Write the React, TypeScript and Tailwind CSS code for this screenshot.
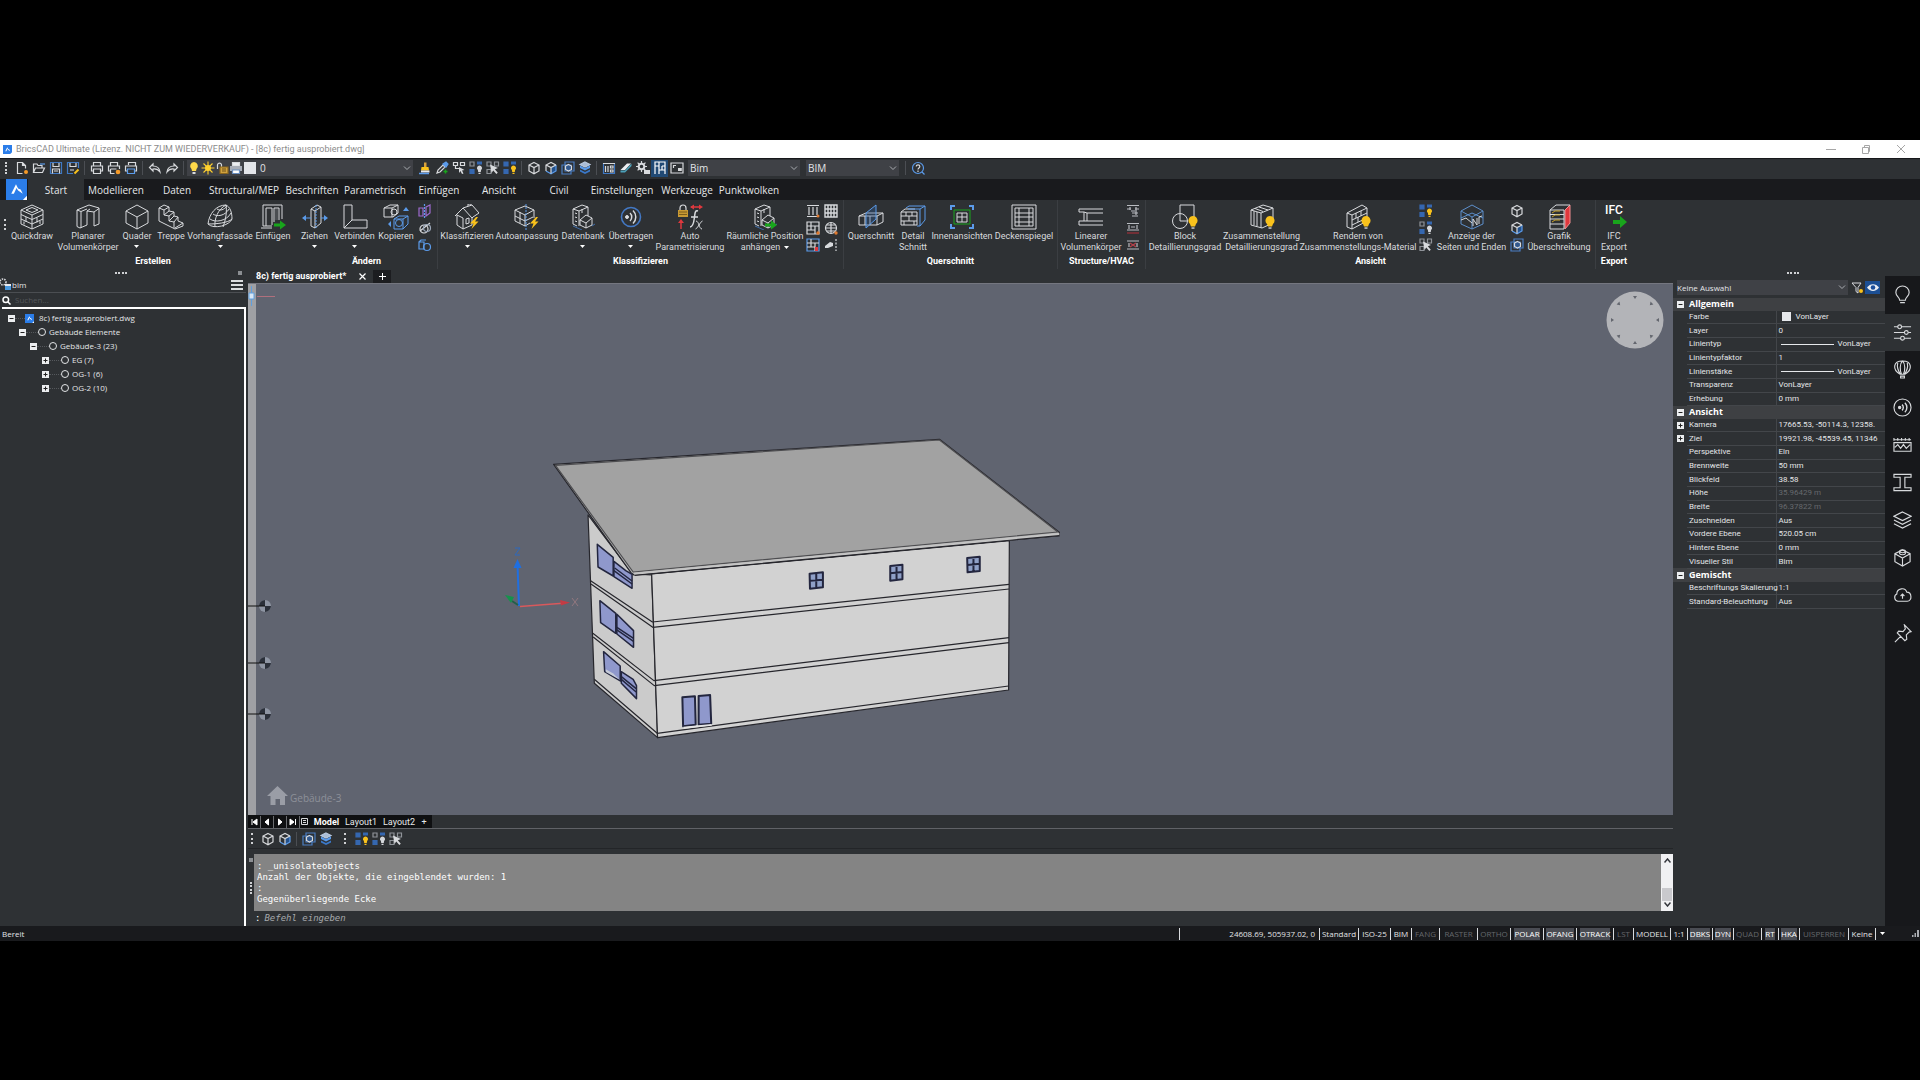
import React from 'react';

type Kids = { children: React.ReactNode };
const W = '#d8dadd';
const B = '#5b9bea';
const Y = '#f9c21c';
const G = '#19a51c';
const R = '#e0383e';

/* ---------- icon canvases ---------- */
const Big = ({ children }: Kids) => (
  <svg className="h-[26px] w-[26px] shrink-0" viewBox="0 0 26 26" fill="none" stroke={W} strokeWidth="1" aria-hidden="true">
    {children}
  </svg>
);
const Sm = ({ children }: Kids) => (
  <svg className="h-[14px] w-[14px] shrink-0" viewBox="0 0 14 14" fill="none" stroke={W} strokeWidth="1.2" aria-hidden="true">
    {children}
  </svg>
);
const Arrow = ({ x = 13, y = 20 }) => (
  <path d={`M${x} ${y - 1.5}h6v-3l6 4.5-6 4.5v-3h-6z`} fill={G} stroke="none" />
);
const Bulb = ({ x = 20, y = 16, s = 1 }) => (
  <g transform={`translate(${x} ${y}) scale(${s})`} stroke="none">
    <path d="M0-5a4.6 4.6 0 0 1 3 8L2 5.500h-4L-3 3a4.600 4.600 0 0 1 3-8z" fill={Y} />
    <path d="M-1.500 6.300h3v1.500h-3z" fill="#c9cacc" />
  </g>
);
const Bolt = ({ x = 18, y = 13 }) => (
  <path d={`M${x + 4} ${y}l-6 6.500h3.500l-2 5.500 7-7.500h-3.500l3-4.500z`} fill={Y} stroke="none" />
);
const CubeP = ({ c = W }) => <path d="M7 1.500l5 2.500v6l-5 2.800-5-2.800V4zM2 4l5 2.600L12 4M7 6.600v6" stroke={c} />;

const Cube = () => <Sm><CubeP /></Sm>;
const CubeBlue = () => (
  <Sm>
    <path d="M7 6.600L12 4v6l-5 2.800z" fill="#24528c" stroke="none" />
    <path d="M2 10l5 2.800 5-2.800V4" stroke={B} />
    <path d="M12 4L7 1.500 2 4v6M2 4l5 2.600L12 4M7 6.600v6" />
  </Sm>
);
const CubeFrame = () => (
  <Sm>
    <path d="M1 4h9v9H1z" stroke="#4a7fc4" />
    <path d="M4 1h9v9H4z" stroke="#4a7fc4" />
    <path d="M7.500 3.500l3 1.500v3.500l-3 1.500-3-1.500V5z" fill="#31588d" />
  </Sm>
);
const CubeStack = () => (
  <Sm>
    <path d="M7 1l5 2.500L7 6 2 3.500z" fill="#a9bcd6" stroke="#b9c9df" />
    <path d="M2 4.500L7 7l5-2.500v2.500L7 9.500 2 7z" stroke="none" fill={B} />
    <path d="M2 8.500v2L7 13l5-2.500v-2L7 11z" stroke="none" fill="#3a78c9" />
  </Sm>
);
const TilesBulb = ({ lit = true }) => (
  <Sm>
    <path d="M1 1h4v4H1z" fill={lit ? '#3567b0' : 'none'} stroke={lit ? '#3567b0' : '#8f9399'} />
    <path d="M1 8.500h4v4H1z" fill="#3567b0" stroke="#3567b0" />
    <path d="M8 .500h5v3H8z" fill="#3567b0" stroke="none" />
    <path d="M10.500 4.500a2.600 2.600 0 0 1 1.600 4.600L11.800 11H9.200l-.3-1.900a2.600 2.600 0 0 1 1.600-4.600zM9.500 11.800h2V13h-2z" fill={lit ? Y : '#d4d6da'} stroke="none" />
  </Sm>
);
const TilesCursor = () => (
  <Sm>
    <path d="M1 1h4v4H1zM8.500 1h4v4h-4zM1 8.500h4v4H1z" stroke="#8f9399" />
    <path d="M4 3.500l8 3.500-3.200 1.200 3 3.600-1.500 1.200-3-3.600L5.500 12z" fill={W} stroke="none" />
  </Sm>
);

/* ---------- quick access icons ---------- */
const NewFile = () => <Sm><path d="M7.500 12.500H2.500v-11h5l3 3v3M7.500 1.500v3h3" /><circle cx="11" cy="11" r="2" fill="#f59a28" stroke="none" /></Sm>;
const OpenFile = () => <Sm><path d="M1.500 11.500V3h3.500l1 1.500h4V7M1.500 11.500L3.500 7h9l-2 4.500z" /><path d="M8 3h5" stroke={B} /></Sm>;
const Save = () => <Sm><path d="M1.500 1.500h11v11h-11z" stroke="#3f78c4" /><path d="M4 2v3.500h6V2M3.500 12.500V8h7v4.500M5 10h4" /></Sm>;
const SaveAs = () => <Sm><path d="M12.500 7V1.500h-11v11H7" stroke="#3f78c4" /><path d="M4 2v3.500h6V2M4 9h4" /><path d="M8.500 12.500l4-4" stroke={Y} strokeWidth="2" /></Sm>;
const Print = () => <Sm><path d="M3.500 5V1.500h7V5M3.500 10h-2V5h11v5h-2M3.500 8h7v4.500h-7z" /></Sm>;
const PrintOrange = () => <Sm><path d="M3.500 5V1.500h7V5M3.500 10h-2V5h11v3M3.500 8h6M3.500 8v4.500h4" /><circle cx="11" cy="11" r="2.300" fill="#f59a28" stroke="none" /></Sm>;
const PrintBlue = () => <Sm><path d="M4.500 4V1.500h7V5M3.500 10h-2V5h11v5h-2" /><path d="M3.500 8h7v4.500h-7z" stroke={B} /></Sm>;
const Undo = () => <Sm><path d="M5 3L1.500 6.500 5 10V8c3-.5 5 .3 7 3-.5-4-3-6-7-6z" /></Sm>;
const Redo = () => <Sm><path d="M9 3l3.500 3.500L9 10V8c-3-.5-5 .3-7 3 .5-4 3-6 7-6z" /></Sm>;
const Lamp = () => <Sm><path d="M7 1a4 4 0 0 1 2.500 7L9 10H5l-.5-2A4 4 0 0 1 7 1z" fill="#ffd84a" stroke="none" /><path d="M5.500 11h3v2h-3z" fill={W} stroke="none" /></Sm>;
const Sun = () => <Sm><circle cx="7" cy="7" r="3" fill="#ffd02e" stroke="none" /><path d="M7 .500v13M.500 7h13M2.500 2.500l9 9M11.500 2.500l-9 9" stroke="#ffd02e" strokeWidth="1.100" /></Sm>;
const Unlock = () => <Sm><path d="M2.500 8V4c0-2.500 4-2.500 4 0v2" /><path d="M5 6h8v6.500H5z" fill="#d0a23f" stroke="#8b671f" /><path d="M7 8h4M7 10h4" stroke="#6d511a" /></Sm>;
const PrinterFill = () => <Sm><path d="M3.500 1.500h7V5h-7z" fill="#eceef2" /><path d="M1 5h12v5H1z" fill="#a9aeb8" stroke="none" /><path d="M3.500 9h7v3.500h-7z" fill="#fff" stroke="#6b8fc0" /></Sm>;
const Brush = () => <Sm><path d="M6 1.500h2.500V6H6z" fill="#d9a23a" stroke="none" /><path d="M3.500 6h7l.5 3.500H3z" fill={Y} stroke="none" /><path d="M3 10.500h8.500" stroke="#e8e9ec" strokeWidth="2" /><path d="M1 12.500h10" stroke={B} strokeWidth="1.500" /></Sm>;
const Dropper = () => <Sm><path d="M2 12l1-3 5-5 2 2-5 5z" stroke={W} /><path d="M8 3l3-2 2 2-2 3z" fill={B} stroke={B} /><path d="M10.500 8.500v4M8.500 10.500h4" stroke={G} strokeWidth="1.500" /></Sm>;
const TreeSel = () => <Sm><path d="M1.500 1.500h4v3h-4zM8.500 1.500h4v3h-4zM3.500 4.500v3H8" /><path d="M7 6l5.500 3-2.500.500 1.500 3-1.500.500-1.500-3L7 12z" fill={W} stroke="none" /></Sm>;
const Table = () => <Sm><path d="M1.500 2.500h11v10h-11z" stroke="#3f78c4" /><path d="M1 2.500h12M3.500 5v6M6 5v6M8.500 5h2.500v2H8.500zM8.500 9h2.500v2H8.500z" /></Sm>;
const Eraser = () => <Sm><path d="M1.500 9L8 2.500h4L6 9z" fill="#eceef2" stroke="none" /><path d="M1.500 9.500v2H6L12.500 5V2.500L6 9.500z" fill="#4ba0b8" stroke="none" /></Sm>;
const Gear = () => <Sm><circle cx="5.500" cy="5.500" r="2.800" strokeWidth="2" /><path d="M5.500 0v2M5.500 9v2M0 5.500h2M9 5.500h2M1.600 1.600l1.500 1.500M8 8l1.500 1.500M1.600 9.400L3 8M8 3l1.500-1.400" /><path d="M8 9h6v4H8z" fill={W} stroke="none" /></Sm>;
const Plan = () => <Sm><path d="M2 13V1h10v12M2 5h4V1M6 5v8M6 9h6M9 5h3M9 5v4" stroke="#fff" /></Sm>;
const Screen = () => <Sm><path d="M1 2h12v10H1zM3.500 7V4.500H6M8 9.500h3V7" /><path d="M8 7h3.500v3H8z" fill={W} stroke="none" /></Sm>;
const Help = () => <Sm><circle cx="7" cy="7" r="5.500" stroke={B} /><path d="M5.300 5.500c0-2.300 3.500-2.200 3.500 0C8.800 7 7 7 7 8.500M7 9.500V11" /><path d="M11 11l2.500 2.500" stroke={B} /></Sm>;

/* ---------- ribbon icons ---------- */
const Quickdraw = () => <Big><path d="M13 1l11 5-11 5L2 6zM2 6v14l11 5 11-5V6M13 11v14M2 10.500l11 5 11-5M2 15l11 5 11-5M7 6l6-2.500L19 6l-6 2.500z" /><path d="M7 13v5M18 13.500v5M5 17.500v3M21 17v3" /></Big>;
const Planar = () => <Big><path d="M2 6l12-5 10 3v16l-5 2V8l-7-1v14l-7 3-3-1.500zM2 6l4 1.500 6-2.500M6 7.500V24M19 8l5-3.500M12 7l3-2" /></Big>;
const Box = () => <Big><path d="M13 1l11 6v12l-11 6-11-6V7zM2 7l11 6 11-6M13 13v12" /></Big>;
const Stairs = () => <Big><path d="M1 4l5-3 5 2v4l5 1v4l4 1v4l5 2v3l-8 3L1 17zM1 4l5 2v5l5 1v5l5 1v6M6 6l5-3M6 11l5-4M11 12l5-4M11 17l5-5M16 18l4-5M17 24l8-5" /></Big>;
const Dome = () => <Big><path d="M1 20C2 10 9 1 19 1c4 2 6 7 6 14-2 6-18 11-24 5z" /><path d="M3 15c5 4 17 2 21-6M6 10c4 3 12 2 16-5M10 5c3 2 7 1 10-3M1 20c8 0 20-1 24-5M8 23C7 15 11 5 19 1M16 23c3-8 4-16 3-22" /></Big>;
const Insert = () => <Big><path d="M3 22V1h19v14M3 22h9M6 22V4h6v17M14 18V4h5v12M1 24h11" /><path d="M15 5h3v11h-3z" fill="#4b4e52" stroke="none" /><Arrow x={14} y={21} /></Big>;
const Pull = () => <Big><path d="M9 5l6-4 4 2v16l-6 5-4-2zM9 5l4 2 6-4M13 7v17" /><path d="M14 1v24" stroke={B} strokeDasharray="2 1" /><path d="M9 14H3M19 14h5" stroke={B} /><path d="M4 11v6l-4-3zM22 11v6l4-3z" fill={B} stroke="none" /></Big>;
const Join = () => <Big><path d="M2 1h8v15h15v8H2zM2 24l8-8" /></Big>;
const Copy = () => <Big><path d="M1 4l6-3h8v8l-5 4H1zM1 4h8v9M9 4l6-3" /><circle cx="11" cy="8" r="3" /><path d="M11 15l5-3h9v8l-5 5h-9zM11 15h9v10M20 15l5-3" stroke={B} /><circle cx="16" cy="19" r="3.500" stroke={B} /><path d="M20 7h6l-3-4zM8 17v6l-3-3z" fill={B} stroke="none" /></Big>;
const Classify = () => <Big><path d="M1 12L9 4l9-3 7 8-6 4M9 4l9 10M18 14v7l-9 4-6-4V11M9 25V14M3 11l6 3M18 14l1-1" /><path d="M12 15l3-1v5l-3 1zM14 2V0h3v1" /><Bolt x={18} y={13} /></Big>;
const AutoFit = () => <Big><path d="M1 6l10-4 9 4-9 5zM1 6v11l10 5V11M20 6v8M11 22l5-3M1 12l10 5 8-4M6 8v11" /><path d="M12 0v26" stroke={B} strokeDasharray="2 1" /><Bolt x={18} y={13} /></Big>;
const Db = ({ arrow = false }) => (
  <Big>
    <path d="M3 5l9-4 6 2v9M3 5v15l4 2M3 5l6 2v15M9 7l9-4M5 9l2 .7M5 13l2 .7M5 17l2 .7M12 5v4" />
    <path d="M10 16l6-5 6 3v7l-6 3-6-3zM10 16l6 3 6-5M16 19v5" />
    <path d="M3 22l9 4M22 22l3-2" stroke="#3f6ca8" />
    {arrow && <Arrow x={13} y={21} />}
  </Big>
);
const Transfer = () => <Big><circle cx="13" cy="13" r="9.500" stroke="#4378c4" strokeWidth="1.600" /><circle cx="9" cy="13" r="1.500" fill={W} /><path d="M12 9a5.500 5.500 0 0 1 0 8M15 6.500a9 9 0 0 1 0 13" strokeWidth="1.500" /></Big>;
const Fx = () => (
  <Big>
    <path d="M3 6V4c0-4 6-4 6 0v2" stroke={W} strokeWidth="1.200" />
    <path d="M1 6h10v7H1z" fill="#c99a33" stroke="none" />
    <path d="M2 8h8M2 10.500h8" stroke="#7c5d1c" />
    <path d="M4 25v-7M14 3h10" stroke={R} strokeWidth="1.500" />
    <path d="M1 19h6l-3-4zM17 .500v5l-4-2.500zM22 .500v5l4-2.500z" fill={R} stroke="none" />
    <path d="M21 7c-3-1-3 2-3.500 6s-1 10-4.500 10M14 13h7" strokeWidth="1.500" />
    <path d="M19 17c3 0 3 8 6 8M25.500 17c-3 1-4 7-7 8" />
  </Big>
);
const Section = () => <Big><path d="M1 12l7-3h17v9l-6 3H1zM1 12h18v9M19 12l6-3M7 12v9M12 12v9" /><path d="M8 9l10-8v14L8 24z" stroke={B} fill="#2f5f9f55" /></Big>;
const Detail = () => <Big><path d="M1 8h16v13H1zM1 8l4-3h10M1 12h16M1 17h16M6 8v4M12 8v4M9 12v5M4 17v4M14 17v4" /><path d="M6 4l3-2h16v14l-5 6h-3M20 5v17M20 5l5-3M8 5h12" stroke={B} /></Big>;
const Interior = () => <Big><path d="M2 6V2h4M20 2h4v4M24 20v4h-4M6 24H2v-4" stroke={B} strokeWidth="2" /><path d="M5 6h16v14H5z" stroke={G} /><path d="M8 9h10v9H8zM13 9v9M8 13h10" /></Big>;
const Ceiling = () => <Big><path d="M1 1h24v24H1zM4 4h18v18H4zM8 4v18M18 4v18M4 9h18M4 13h18M4 18h18" /></Big>;
const Linear = () => <Big><path d="M25 5H1v3h5v9H1v4h24M25 9H9v8h16M6 8l3 1M6 17h3" /></Big>;
const Block = () => <Big><path d="M8 9V1h14v18" /><circle cx="8" cy="17" r="7.500" /><path d="M8 10v7h7" /><Bulb x={21} y={17} /></Big>;
const Assembly = () => <Big><path d="M2 6l12-5 10 3v15l-11 5-11-3zM2 6l10 3 12-5M12 9v15M5 7v14M8 8v14M6 4.500l8 3M10 3l9 3" /><Bulb x={21} y={17} /></Big>;
const Render = () => <Big><path d="M2 9l15-8 5 3v13L7 25l-5-2zM2 9l5 2L22 4M7 11v14M7 16l15-7M7 21l15-7M11 9v5M16 7v5M13 13v5" /><Bulb x={21} y={17} /></Big>;
const SideEnd = () => <Big><path d="M2 7l11-6 11 6v13l-11 5-11-5zM2 7l11 6 11-6M13 13v12M2 14l11-5 11 5" stroke="#5d8fcb" /><path d="M2 16l5-2 6 5M14 22v-7l4 6v-7M20 20v-7l3-1" /></Big>;
const Graphic = () => <Big><path d="M19 6l5-5v18l-5 6z" fill={R} stroke="#f08e90" /><path d="M4 6h14v19H4zM4 6l6-5h14M4 10.500h14M4 15h14M4 20h14" /><path d="M6 9l3-2h5M6 13l3-2h5M6 18l3-2h5" stroke="#c9a227" /></Big>;

const Caret = () => <svg className="h-[3px] w-[5px]" viewBox="0 0 5 3" aria-hidden="true"><path d="M0 0h5L2.500 3z" fill="#fff" /></svg>;

type Item = { w: string; t: string[]; i?: React.ReactNode; d?: boolean };

const RibbonButton = ({ w, t, i, d }: Item) => (
  <button type="button" className={`flex flex-col items-center gap-px ${w}`}>
    {i}
    <span className="flex flex-col items-center font-[Roboto,sans-serif] text-[9px] leading-[11px] whitespace-nowrap text-[#d9dbde]">
      {t.map((l, n) => (
        <span key={l} className="flex items-center gap-1">
          {l}
          {d && t.length === 2 && n === 1 && <Caret />}
        </span>
      ))}
      {d && t.length === 1 && <span className="flex h-[9px] items-center"><Caret /></span>}
    </span>
  </button>
);

const IconStack = ({ label, icons }: { label: string; icons: React.ReactNode[] }) => (
  <div className="flex w-[18px] flex-col items-center gap-[3px]">
    {icons.map((ic, n) => (
      <button key={n} type="button" aria-label={`${label} ${n + 1}`} className="flex h-[14px] w-[14px] items-center justify-center">{ic}</button>
    ))}
  </div>
);

const Group = ({ name, children, last = false }: { name: string; children: React.ReactNode; last?: boolean }) => (
  <section aria-label={name} className={`flex flex-col pt-1 ${last ? '' : 'border-r border-[#3b3e42]'}`}>
    <div className="flex h-[51px] items-start">{children}</div>
    <h2 className="text-center font-[Roboto,sans-serif] text-[9px] leading-[12px] font-bold text-white">{name}</h2>
  </section>
);

const Grid1 = () => <Sm><path d="M1 1.500h12M1 12.500h12M3 3v8M7 3v8M11 3v8" /><circle cx="12" cy="12" r="1.500" fill="#e07a30" stroke="none" /></Sm>;
const Grid2 = () => <Sm><path d="M1 1h12v12H1zM4 1v12M7 1v12M10 1v12M1 5h12M1 9h12" strokeWidth="1.400" /></Sm>;
const Grid3 = () => <Sm><path d="M1 1h12v12H1zM5 1v8M1 5h12M9 5v8M1 9h8" /><circle cx="12" cy="12" r="1.700" fill="#e07a30" stroke="none" /></Sm>;
const Grid4 = () => <Sm><circle cx="7" cy="7" r="5.500" /><path d="M2 7h10M7 1.500v11M3 4h8M3 10h8" /><circle cx="12" cy="12" r="1.700" fill="#e07a30" stroke="none" /></Sm>;
const Grid5 = () => <Sm><path d="M1 1h12v12H1z" stroke={B} /><path d="M5 1v8M1 5h12M9 5v8M1 9h8" /><path d="M9 9h3v4H9z" fill={R} stroke="none" /></Sm>;
const Grid6 = () => <Sm><path d="M1 8l5-4 3 1v3L4 10H1z" fill={W} stroke="none" /><path d="M12 1v12" strokeDasharray="2 1.500" /></Sm>;
const PurplePlane = () => <Sm><path d="M1 4h4v8H1zM8 3l4-2v8l-4 3z" stroke="#9e6bd0" /><path d="M6.500 0v14" stroke={B} strokeDasharray="2 1" /></Sm>;
const Scale = () => <Sm><circle cx="6" cy="8" r="4" /><path d="M2 10L12 2" /><circle cx="9" cy="7" r="3.500" stroke="#9aa6b8" /></Sm>;
const Pair = () => <Sm><path d="M1 4h5v7H1zM1 4l2-2h5" stroke={B} /><circle cx="9" cy="9" r="3.500" stroke={B} /></Sm>;
const Beam1 = () => <Sm><path d="M1 1.500h12M1 5h4M9 5h4M5 7h4M4 3v3M10 3v8M6 12h6M6 9h6" stroke="#b9bcc1" /></Sm>;
const Beam2 = () => <Sm><path d="M1 2.500h12M3 4v4M11 4v4M1 9h12M5 6h4" stroke="#b9bcc1" /><path d="M1 12h12" stroke="#a0303a" /></Sm>;
const Beam3 = () => <Sm><path d="M1 3h12M1 11h12M3 5v4M11 5v4" stroke="#b9bcc1" /><path d="M4 5l6 4M10 5L4 9" stroke="#b8404a" /></Sm>;

/* ---------- small shared parts ---------- */
const Sep = () => <span className="flex w-[7px] justify-center"><span className="h-[14px] w-px bg-[#4b4e53]" /></span>;
const Grip = ({ h = 'h-[12px]' }) => <span className={`w-0 border-l-2 border-dotted border-[#cfd1d4] ${h}`} />;
const ToolGroup = ({ items }: { items: [string, React.ReactNode][] }) => (
  <>
    {items.map(([n, ic]) => (
      <button key={n} type="button" aria-label={n} className={`flex h-[17px] w-[17px] items-center justify-center ${n === 'Grundriss' ? 'bg-[#214a75]' : ''}`}>{ic}</button>
    ))}
  </>
);
const Chevron = () => (
  <svg className="pointer-events-none absolute right-[2px] h-[5px] w-[8px]" viewBox="0 0 8 5" fill="none" stroke="#a9acb0" aria-hidden="true"><path d="M1 .500l3 3 3-3" /></svg>
);
const Combo = ({ label, value, w, px = 'px-1' }: { label: string; value: string; w: string; px?: string }) => (
  <span className={`relative flex items-center bg-[#3f4146] ${w}`}>
    <select aria-label={label} className={`h-full w-full appearance-none bg-transparent outline-none ${px}`}><option>{value}</option></select>
    <Chevron />
  </span>
);

const AppLogo = ({ c }: { c: string }) => (
  <svg className={c} viewBox="0 0 20 20" aria-hidden="true">
    <path d="M0 0h20v20H0z" fill="#2b7de9" />
    <path d="M9.500 5L5 14h2.500L10 8.500l1.500 2.500 4.500 3-2-4-2.500-1z" fill="#fff" />
    <path d="M20 16v4h-4z" fill="#fff" />
  </svg>
);

const TitleBar = () => (
  <header className="flex h-[18px] items-center bg-white pl-[3px]">
    <AppLogo c="h-[9px] w-[9px]" />
    <h1 className="ml-[4px] font-[Roboto,sans-serif] text-[9px] leading-[12px] text-[#8b8b8b]">BricsCAD Ultimate (Lizenz. NICHT ZUM WIEDERVERKAUF) - [8c) fertig ausprobiert.dwg]</h1>
    <div className="ml-auto flex items-center gap-[25px] pr-[14px] text-[#a6a6a6]">
      <button type="button" aria-label="Minimieren"><svg className="h-[10px] w-[10px]" viewBox="0 0 10 10"><path d="M0 5.500h10" stroke="currentColor" /></svg></button>
      <button type="button" aria-label="Wiederherstellen"><svg className="h-[10px] w-[10px]" viewBox="0 0 10 10" fill="none" stroke="currentColor"><path d="M1.500 3.500h6v6h-6zM3.500 3.500v-2h5v6h-1" /></svg></button>
      <button type="button" aria-label="Schließen"><svg className="h-[10px] w-[10px]" viewBox="0 0 10 10" stroke="currentColor"><path d="M1 1l8 8M9 1L1 9" /></svg></button>
    </div>
  </header>
);

const QuickBar = () => (
  <div className="flex h-[21px] items-center border-t border-[#17181b] pb-[2px] pl-[5px] text-[10px] text-[#e2e4e6]">
    <Grip />
    <span className="w-[6px]" />
    <ToolGroup items={[['Neu', <NewFile />], ['Öffnen', <OpenFile />], ['Speichern', <Save />], ['Speichern unter', <SaveAs />]]} />
    <Sep />
    <ToolGroup items={[['Drucken', <Print />], ['Druckvorschau', <PrintOrange />], ['Publizieren', <PrintBlue />]]} />
    <Sep />
    <ToolGroup items={[['Zurück', <Undo />], ['Wiederholen', <Redo />]]} />
    <Sep />
    <div className="flex h-[16px] w-[226px] items-center bg-[#3f4146]">
      <Lamp /><Sun /><Unlock /><PrinterFill />
      <span className="ml-px h-[12px] w-[12px] bg-[#e4e6ea]" />
      <Combo label="Layer" value="0" w="h-full flex-1" />
    </div>
    <span className="w-[3px]" />
    <ToolGroup items={[['Eigenschaften anpassen', <Brush />], ['Pipette', <Dropper />], ['Strukturauswahl', <TreeSel />], ['Isolieren', <TilesBulb lit={false} />], ['Auswahl', <TilesCursor />], ['Alle zeigen', <TilesBulb />]]} />
    <Sep />
    <ToolGroup items={[['Drahtmodell', <Cube />], ['Schattiert', <CubeBlue />], ['Röntgen', <CubeFrame />], ['Realistisch', <CubeStack />]]} />
    <Sep />
    <ToolGroup items={[['Tabelle', <Table />], ['Radieren', <Eraser />], ['Einstellungen öffnen', <Gear />], ['Grundriss', <Plan />], ['Bildschirm', <Screen />]]} />
    <span className="w-[3px]" />
    <Combo label="Visueller Stil" value="Bim" w="h-[16px] w-[112px]" px="px-[2px]" />
    <span className="w-[6px]" />
    <Combo label="Arbeitsbereich" value="BIM" w="h-[16px] w-[93px]" px="px-[2px]" />
    <span className="ml-[3px]"><Sep /></span>
    <ToolGroup items={[['Hilfe', <Help />]]} />
  </div>
);

const TABS: [string, string][] = [
  ['Start', 'w-[56px] bg-[#2e3134]'], ['Modellieren', 'w-[64px]'], ['Daten', 'w-[58px]'], ['Structural/MEP', 'w-[76px]'],
  ['Beschriften', 'w-[60px]'], ['Parametrisch', 'w-[66px]'], ['Einfügen', 'w-[62px]'], ['Ansicht', 'w-[58px]'],
  ['Civil', 'w-[62px]'], ['Einstellungen', 'w-[64px]'], ['Werkzeuge', 'w-[66px]'], ['Punktwolken', 'w-[58px]'],
];

const TabBar = () => (
  <nav aria-label="Multifunktionsleiste" className="flex h-[21px] items-stretch bg-[#191a1d] pl-[6px]">
    <button type="button" aria-label="BricsCAD" className="mr-px flex w-[21px] items-center"><AppLogo c="h-[21px] w-[21px]" /></button>
    {TABS.map(([t, c]) => (
      <button key={t} type="button" className={`flex items-center justify-center pt-px text-[10px] whitespace-nowrap text-[#e6e8ea] ${c}`}>{t}</button>
    ))}
  </nav>
);

const Ribbon = () => (
  <div className="flex h-[69px] items-stretch">
    <span className="flex w-[10px] items-center justify-center pb-[20px]"><Grip h="h-[11px]" /></span>
    <Group name="Erstellen" last>
      <RibbonButton w="w-[44px]" t={['Quickdraw']} i={<Quickdraw />} />
      <RibbonButton w="w-[68px]" t={['Planarer', 'Volumenkörper']} i={<Planar />} />
      <RibbonButton w="w-[30px]" t={['Quader']} d i={<Box />} />
      <RibbonButton w="w-[38px]" t={['Treppe']} i={<Stairs />} />
      <RibbonButton w="w-[60px]" t={['Vorhangfassade']} d i={<Dome />} />
      <RibbonButton w="w-[46px]" t={['Einfügen']} i={<Insert />} />
    </Group>
    <Group name="Ändern">
      <RibbonButton w="w-[37px]" t={['Ziehen']} d i={<Pull />} />
      <RibbonButton w="w-[43px]" t={['Verbinden']} d i={<Join />} />
      <RibbonButton w="w-[40px]" t={['Kopieren']} i={<Copy />} />
      <IconStack label="Ändern" icons={[<PurplePlane />, <Scale />, <Pair />]} />
      <span className="w-[3px]" />
    </Group>
    <Group name="Klassifizieren">
      <RibbonButton w="w-[58px]" t={['Klassifizieren']} d i={<Classify />} />
      <RibbonButton w="w-[62px]" t={['Autoanpassung']} i={<AutoFit />} />
      <RibbonButton w="w-[50px]" t={['Datenbank']} d i={<Db />} />
      <RibbonButton w="w-[46px]" t={['Übertragen']} d i={<Transfer />} />
      <RibbonButton w="w-[72px]" t={['Auto', 'Parametrisierung']} i={<Fx />} />
      <RibbonButton w="w-[78px]" t={['Räumliche Position', 'anhängen']} d i={<Db arrow />} />
      <IconStack label="Aufbau" icons={[<Grid1 />, <Grid3 />, <Grid5 />]} />
      <IconStack label="Material" icons={[<Grid2 />, <Grid4 />, <Grid6 />]} />
      <span className="w-[3px]" />
    </Group>
    <Group name="Querschnitt">
      <RibbonButton w="w-[54px]" t={['Querschnitt']} i={<Section />} />
      <RibbonButton w="w-[30px]" t={['Detail', 'Schnitt']} i={<Detail />} />
      <RibbonButton w="w-[68px]" t={['Innenansichten']} i={<Interior />} />
      <RibbonButton w="w-[56px]" t={['Deckenspiegel']} i={<Ceiling />} />
      <span className="w-[5px]" />
    </Group>
    <Group name="Structure/HVAC">
      <RibbonButton w="w-[66px]" t={['Linearer', 'Volumenkörper']} i={<Linear />} />
      <IconStack label="Profil" icons={[<Beam1 />, <Beam2 />, <Beam3 />]} />
      <span className="w-[3px]" />
    </Group>
    <Group name="Ansicht">
      <RibbonButton w="w-[78px]" t={['Block', 'Detaillierungsgrad']} i={<Block />} />
      <RibbonButton w="w-[75px]" t={['Zusammenstellung', 'Detaillierungsgrad']} i={<Assembly />} />
      <RibbonButton w="w-[118px]" t={['Rendern von', 'Zusammenstellungs-Material']} i={<Render />} />
      <IconStack label="Sichtbarkeit" icons={[<TilesBulb />, <TilesBulb lit={false} />, <TilesCursor />]} />
      <RibbonButton w="w-[73px]" t={['Anzeige der', 'Seiten und Enden']} i={<SideEnd />} />
      <IconStack label="Stil" icons={[<Cube />, <CubeBlue />, <CubeFrame />]} />
      <RibbonButton w="w-[66px]" t={['Grafik', 'Überschreibung']} i={<Graphic />} />
      <span className="w-[3px]" />
    </Group>
    <Group name="Export" last>
      <RibbonButton
        w="w-[36px]"
        t={['IFC', 'Export']}
        i={
          <span className="flex h-[26px] flex-col">
            <span className="font-[Roboto,sans-serif] text-[12px] leading-[12px] font-medium text-white">IFC</span>
            <svg className="ml-[11px] h-[12px] w-[14px]" viewBox="0 0 14 12" aria-hidden="true"><path d="M0 4h7V0l7 6-7 6V8H0z" fill={G} /></svg>
          </span>
        }
      />
    </Group>
  </div>
);

/* ---------- structure tree ---------- */
const TREE: [string, string, boolean, string][] = [
  ['8c) fertig ausprobiert.dwg', 'pl-[8px]', true, 'dwg'],
  ['Gebäude Elemente', 'pl-[19px]', true, ''],
  ['Gebäude-3 (23)', 'pl-[30px]', true, ''],
  ['EG (7)', 'pl-[42px]', false, ''],
  ['OG-1 (6)', 'pl-[42px]', false, ''],
  ['OG-2 (10)', 'pl-[42px]', false, ''],
];
const Toggle = ({ open }: { open: boolean }) => (
  <svg className="h-[7px] w-[7px] shrink-0" viewBox="0 0 7 7" aria-hidden="true">
    <path d="M0 0h7v7H0z" fill="#eceef0" />
    <path d={open ? 'M1.500 3.500h4' : 'M1.500 3.500h4M3.500 1.500v4'} stroke="#222" />
  </svg>
);

const StructurePanel = () => (
  <aside aria-label="Struktur" className="flex w-[246px] shrink-0 flex-col text-[8px] leading-[14px] text-[#e4e6e8]">
    <div className="flex h-[8px] items-center justify-end">
      <span className="mr-[111px] h-0 w-[12px] border-t-2 border-dotted border-[#cfd1d4]" />
      <button type="button" aria-label="Panel schließen" className="mr-[4px] h-[4px] w-[4px] bg-[#8b8e92]" />
    </div>
    <div className="flex h-[16px] items-center border-b border-[#4b4e52] pr-[3px]">
      <svg className="h-[13px] w-[11px]" viewBox="0 0 11 13" fill="none" aria-hidden="true">
        <circle cx="3" cy="4" r="3" stroke={W} strokeWidth="1.500" strokeDasharray="1.500 1" />
        <path d="M5 6h6v6H5z" fill="#4a9ae0" /><path d="M5 6h6v2H5z" fill="#e8eaee" />
      </svg>
      <h2 className="ml-px">bim</h2>
      <button type="button" aria-label="Menü" className="ml-auto flex w-[12px] flex-col gap-[2px]">
        <span className="h-[2px] bg-[#dcdee0]" /><span className="h-[2px] bg-[#dcdee0]" /><span className="h-[2px] bg-[#dcdee0]" />
      </button>
    </div>
    <label className="flex h-[14px] items-center pl-[2px]">
      <svg className="h-[9px] w-[9px]" viewBox="0 0 9 9" fill="none" stroke="#fff" strokeWidth="1.500" aria-hidden="true"><circle cx="3.800" cy="3.800" r="2.800" /><path d="M6 6l2.500 2.500" /></svg>
      <input type="text" aria-label="Suchen" placeholder="Suchen..." className="ml-[4px] w-[200px] bg-transparent outline-none placeholder:text-[#54575b]" />
    </label>
    <ul className="ml-[2px] flex-1 border-t-2 border-r-2 border-white pt-[2px]">
      {TREE.map(([t, p, open, kind]) => (
        <li key={t} className={`-ml-[2px] flex h-[14px] items-center ${p}`}>
          <button type="button" aria-label={`${t} umschalten`} className="h-[7px] w-[7px]"><Toggle open={open} /></button>
          <span className={`h-0 border-t border-dotted border-[#55585c] ${kind ? 'w-[10px]' : 'w-[12px]'}`} />
          {kind ? <AppLogo c="h-[11px] w-[9px]" /> : <span className="h-[8px] w-[8px] rounded-full border border-[#e3e5e7]" />}
          <span className={kind ? 'ml-[5px]' : 'ml-[3px]'}>{t}</span>
        </li>
      ))}
    </ul>
  </aside>
);

/* ---------- drawing area ---------- */
const Marker = ({ y }: { y: number }) => (
  <g transform={`translate(17 ${y})`}>
    <circle r="6" fill="#8e95a3" />
    <path d="M0 0V-6A6 6 0 0 0-6 0zM0 0V6A6 6 0 0 0 6 0z" fill="#2b303a" />
    <path d="M-17 0H0" stroke="#111" />
  </g>
);

const Model = () => (
  <svg className="absolute inset-0 h-full w-full" role="img" aria-label="Gebäudemodell">
    <path d="M0 0h8v540H0z" fill="#9fa0a4" />
    <path d="M9 12.500h18" stroke="#b0707d" />
    <path d="M1 9h5v6H1zM3.500 2v7M3.500 15v7" stroke="#5f9fde" fill="#d7e6f5" />
    <Marker y={322} /><Marker y={379} /><Marker y={430} />
    <g transform="translate(252 136) scale(.3699 .3333)" stroke="#26262c" strokeWidth="1.200" strokeLinejoin="round">
      <g fill="#d2d2d2" className="[&>*]:[vector-effect:non-scaling-stroke]">
        <path d="M238 285L255 790 426 953 410 465 358 462z" fill="#cbcbcb" />
        <path d="M410 462L426 953 1375 810 1377 362z" />
        <path d="M245 482L412 606 1376 493M246 492L413 622 1376 507M251 640L416 782 1376 653M252 651L417 797 1376 668M255 778L425 940 1375 798" fill="none" />
        <path d="M145 133L1188 58 1512 337 1512 347 362 465 354 458z" fill="#b4b4b4" />
        <path d="M150 136L1188 60 1508 336 360 456z" fill="#a2a2a2" stroke="#4d4d50" />
        <path d="M362 458L1512 339V347L364 465z" fill="#c4c4c4" stroke="none" />
        <path d="M364 466L1512 347" />
      </g>
      <g className="[&>*]:[vector-effect:non-scaling-stroke]" fill="#8f98cc" stroke="#23263f" strokeWidth="1.500">
        <path d="M263 373L306 412V468L265 441zM308 424L340 452 357 463V505L308 470z" />
        <path d="M310 444L357 483M308 452L357 492" />
        <path d="M270 542L313 580V640L272 608zM316 583L361 632V682L316 642z" />
        <path d="M316 622L361 655M316 630L361 664" />
        <path d="M280 695L325 738V783L283 755zM328 755L360 778 369 797V836L328 790z" />
        <path d="M328 770L368 806M328 778L368 816" />
        <path d="M286 748L305 760 325 780 286 756z" fill="#c6cbd8" stroke="none" />
        <path d="M837 461L873 457V502L838 506zM855 459V503M838 482L873 479M1055 438L1088 434V478L1055 482zM1072 436V480M1055 460L1088 456M1263 414L1297 410V453L1264 457zM1280 412V455M1264 435L1297 431" fill="#8fa0c8" strokeWidth="2" />
        <path d="M493 832L527 829 529 914 495 919zM537 828L568 825 571 911 537 914z" strokeWidth="2" />
        <path d="M496 920L572 912 573 917 497 926z" fill="#e4e4e4" stroke="none" />
      </g>
    </g>
    <g fill="none">
      <path d="M271 322L269.500 280" stroke="#1f6fe0" strokeWidth="2" />
      <path d="M265.500 284l4-9 4 9z" fill="#1f6fe0" />
      <path d="M267 264h5l-5 7h5" stroke="#2d69bd" />
      <path d="M272 322.500l46-3.500" stroke="#d9595c" strokeWidth="1.500" />
      <path d="M312 316l10 2.500-9 3z" fill="#c33b44" />
      <path d="M324 322l6-8M324 314l6 8" stroke="#93787f" />
      <path d="M270 321l-6-4" stroke="#23604a" strokeWidth="2" />
      <path d="M257 311l9 2-3 6z" fill="#14934c" />
    </g>
    <g transform="translate(19 501)" fill="#9a9da6">
      <path d="M10.500 1l10.500 10h-3v9h-5v-6H8.500v6h-5v-9H0z" />
    </g>
  </svg>
);

const ViewCube = () => (
  <svg className="absolute top-[7px] right-[9px] h-[58px] w-[58px]" viewBox="-29 -29 58 58" aria-label="Ansichtswürfel" role="img">
    <circle r="28.500" fill="#b3b4b8" />
    {[0, 45, 90, 135, 180, 225, 270, 315].map((a) => (
      <g key={a} transform={`rotate(${a})`}><path d="M-2-24h4l-2 3z" fill="#63666e" /></g>
    ))}
  </svg>
);

const DocTabs = () => (
  <div className="flex h-[14px] items-center pl-[8px] font-[Roboto,sans-serif] text-[9px] leading-[12px] text-white">
    <button type="button" className="w-[94px] text-left font-bold whitespace-nowrap">8c) fertig ausprobiert*</button>
    <button type="button" aria-label="Dokument schließen" className="ml-[9px]"><svg className="h-[7px] w-[7px]" viewBox="0 0 7 7" stroke="#fff" strokeWidth="1.200"><path d="M.500.500l6 6M6.500.500l-6 6" /></svg></button>
    <button type="button" aria-label="Neues Dokument" className="ml-[7px] flex h-[13px] w-[18px] items-center justify-center bg-[#1c1d20]"><svg className="h-[7px] w-[7px]" viewBox="0 0 7 7" stroke="#fff"><path d="M3.500 0v7M0 3.500h7" /></svg></button>
  </div>
);

const NAV = [['Erstes', 'M3 1v6M8 1L4 4l4 3z'], ['Vorheriges', 'M6.500 1L3 4l3.500 3z'], ['Nächstes', 'M3.500 1L7 4 3.500 7z'], ['Letztes', 'M7.500 1v6M2 1l4 3-4 3z']];
const LayoutTabs = () => (
  <div className="flex h-[14px] items-center border-b border-[#606267] font-[Roboto,sans-serif] text-[9px] leading-[12px] text-[#e6e8ea]">
    <div className="flex h-[13px] items-center bg-[#0f1012]">
      {NAV.map(([n, d]) => (
        <button key={n} type="button" aria-label={n} className="flex h-[12px] w-[13px] items-center justify-center border-r border-[#6a6c70]">
          <svg className="h-[8px] w-[10px]" viewBox="0 0 10 8" fill="#fff" stroke="#fff"><path d={d} /></svg>
        </button>
      ))}
      <button type="button" aria-label="Layoutliste" className="mx-px"><svg className="h-[7px] w-[7px]" viewBox="0 0 7 7" fill="none" stroke="#d8dadd"><path d="M.500.500h6v6h-6zM2 2.500h3M2 4.500h3" /></svg></button>
      <button type="button" className="w-[35px] font-bold text-white">Model</button>
      <button type="button" className="w-[34px]">Layout1</button>
      <button type="button" className="w-[42px]">Layout2</button>
      <button type="button" aria-label="Layout hinzufügen" className="flex w-[12px] justify-center pr-[4px]">+</button>
    </div>
  </div>
);

const CommandArea = () => (
  <div className="flex flex-col">
    <div className="flex h-[20px] items-center border-b border-[#232528] pl-[3px]">
      <Grip h="h-[11px]" />
      <span className="w-[6px]" />
      <ToolGroup items={[['Drahtmodell unten', <Cube />], ['Schattiert unten', <CubeBlue />]]} />
      <Sep />
      <ToolGroup items={[['Röntgen unten', <CubeFrame />], ['Realistisch unten', <CubeStack />]]} />
      <span className="w-[10px]" />
      <Grip h="h-[11px]" />
      <span className="w-[7px]" />
      <ToolGroup items={[['Zeigen', <TilesBulb />], ['Verbergen', <TilesBulb lit={false} />], ['Auswahl isolieren', <TilesCursor />]]} />
    </div>
    <div className="mt-[5px] flex h-[57px]">
      <div className="flex w-[6px] shrink-0 flex-col items-center gap-[20px] pt-[4px]">
        <button type="button" aria-label="Befehlszeile schließen" className="h-[4px] w-[4px] bg-[#8b8e92]" />
        <Grip h="h-[12px]" />
      </div>
      <pre className="flex-1 bg-[#848484] pt-[7px] pl-[3px] font-['DejaVu_Sans_Mono','Liberation_Mono',monospace] text-[9px] leading-[11px] text-white">{': _unisolateobjects\nAnzahl der Objekte, die eingeblendet wurden: 1\n:\nGegenüberliegende Ecke'}</pre>
      <div className="flex w-[12px] flex-col items-center justify-between bg-[#f1f1f3] py-[4px]">
        <svg className="h-[5px] w-[7px]" viewBox="0 0 7 5" fill="none" stroke="#33353b" strokeWidth="1.500"><path d="M.500 4.500l3-3.500 3 3.500" /></svg>
        <span className="mt-[23px] h-[13px] w-[10px] bg-[#c9c9cd]" />
        <svg className="h-[5px] w-[7px]" viewBox="0 0 7 5" fill="none" stroke="#33353b" strokeWidth="1.500"><path d="M.500.500l3 3.500 3-3.500" /></svg>
      </div>
    </div>
    <label className="flex h-[15px] items-center pl-[7px] font-['DejaVu_Sans_Mono','Liberation_Mono',monospace] text-[9px] text-white">
      :
      <input type="text" aria-label="Befehl" placeholder="Befehl eingeben" className="ml-[4px] flex-1 bg-transparent outline-none placeholder:text-[#a6a9ac] placeholder:italic" />
    </label>
  </div>
);

/* ---------- properties ---------- */
type Row = { h?: string; n?: string; v?: string; k?: 'color' | 'line'; plus?: boolean; dim?: boolean };
const PROPS: Row[] = [
  { h: 'Allgemein' },
  { n: 'Farbe', v: 'VonLayer', k: 'color' }, { n: 'Layer', v: '0' }, { n: 'Linientyp', v: 'VonLayer', k: 'line' },
  { n: 'Linientypfaktor', v: '1' }, { n: 'Linienstärke', v: 'VonLayer', k: 'line' }, { n: 'Transparenz', v: 'VonLayer' }, { n: 'Erhebung', v: '0 mm' },
  { h: 'Ansicht' },
  { n: 'Kamera', v: '17665.53, -50114.3, 12358.', plus: true }, { n: 'Ziel', v: '19921.98, -45539.45, 11346', plus: true },
  { n: 'Perspektive', v: 'Ein' }, { n: 'Brennweite', v: '50 mm' }, { n: 'Blickfeld', v: '38.58' },
  { n: 'Höhe', v: '35.96429 m', dim: true }, { n: 'Breite', v: '96.37822 m', dim: true }, { n: 'Zuschneiden', v: 'Aus' },
  { n: 'Vordere Ebene', v: '520.05 cm' }, { n: 'Hintere Ebene', v: '0 mm' }, { n: 'Visueller Stil', v: 'Bim' },
  { h: 'Gemischt' },
  { n: 'Beschriftungs Skalierung', v: '1:1' }, { n: 'Standard-Beleuchtung', v: 'Aus' },
];

const PropertiesPanel = () => (
  <aside aria-label="Eigenschaften" className="flex w-[212px] shrink-0 flex-col text-[8px] leading-[12px] text-[#e4e6e8]">
    <div className="flex h-[11px] justify-center pt-[3px] pl-[28px]"><span className="h-0 w-[12px] border-t-2 border-dotted border-[#cfd1d4]" /></div>
    <div className="flex h-[15px] items-center pl-[4px]">
      <Combo label="Auswahl" value="Keine Auswahl" w="h-[15px] w-[171px]" px="px-0" />
      <button type="button" aria-label="Filter" className="flex w-[17px] justify-center">
        <svg className="h-[12px] w-[12px]" viewBox="0 0 12 12" fill="none" stroke={W} aria-hidden="true"><path d="M1 1h9L7 5.500V11l-2-1.500v-4z" /><circle cx="10" cy="9" r="2" fill={Y} stroke="none" /></svg>
      </button>
      <button type="button" aria-label="Vorschau" className="flex h-[13px] w-[15px] items-center justify-center bg-[#1c4f94]">
        <svg className="h-[9px] w-[12px]" viewBox="0 0 12 9" aria-hidden="true"><path d="M0 4.500C3 0 9 0 12 4.500 9 9 3 9 0 4.500z" fill="#e9edf4" /><circle cx="6" cy="4.500" r="2.300" fill="#1b4f9c" /></svg>
      </button>
    </div>
    <table className="mt-[3px] h-[311px] w-full table-fixed border-collapse font-[Roboto,sans-serif]">
      <colgroup><col className="w-[14px]" /><col className="w-[89px]" /><col /></colgroup>
      <tbody>
        {PROPS.map((r) =>
          r.h ? (
            <tr key={r.h} className="bg-[#3e4043]">
              <td className="p-0"><button type="button" aria-label={`${r.h} umschalten`} className="ml-[4px] block"><Toggle open /></button></td>
              <th colSpan={2} className="p-0 pl-[2px] text-left font-['Open_Sans',sans-serif] text-[9px] leading-[12px] font-bold text-white">{r.h}</th>
            </tr>
          ) : (
            <tr key={r.n}>
              <td className="p-0">{r.plus && <button type="button" aria-label={`${r.n} umschalten`} className="ml-[4px] block"><Toggle open={false} /></button>}</td>
              <th scope="row" className="border-r border-b border-[#43464a] p-0 pl-[2px] text-left font-normal whitespace-nowrap">{r.n}</th>
              <td className={`border-b border-[#43464a] p-0 pl-[2px] whitespace-nowrap ${r.dim ? 'text-[#66696d]' : ''}`}>
                <span className="flex items-center">
                  {r.k === 'color' && <span className="mr-[5px] ml-[3px] h-[9px] w-[9px] bg-[#e6e8eb]" />}
                  {r.k === 'line' && <span className="mr-[4px] ml-[2px] h-px w-[53px] bg-[#e6e8eb]" />}
                  {r.v}
                </span>
              </td>
            </tr>
          )
        )}
      </tbody>
    </table>
  </aside>
);

const SIDE: [string, React.ReactNode][] = [
  ['Tipps', <path d="M7 16c0-3-4-4-4-8a7 7 0 0 1 14 0c0 4-4 5-4 8zM7.500 18.500h5" />],
  ['Eigenschaften anzeigen', <><path d="M1 4h4M9 4h10M1 10h11M16 10h3M1 16h7M12 16h7" /><circle cx="7" cy="4" r="2" /><circle cx="14" cy="10" r="2" /><circle cx="10" cy="16" r="2" /></>],
  ['Komponenten', <path d="M10 1c10 0 11 9 2.500 14h-5C-1 10 0 1 10 1zM10 1c-3 3-3 10-1 14M10 1c3 3 3 10 1 14M5 3c-1 4 0 8 3 12M15 3c1 4 0 8-3 12M8 17h4v2H8z" />],
  ['Übertragung', <><circle cx="10" cy="10" r="9" /><circle cx="7" cy="10" r="1.200" fill={W} /><path d="M9.500 7a4 4 0 0 1 0 6M12.500 5a7 7 0 0 1 0 10" strokeWidth="1.500" /></>],
  ['Details', <path d="M1 7h18v9H1zM2 12l3-3 3 4 3-4 3 4 4-4M1 4h18M1 2v3M5 2v3M9 2v3M13 2v3M17 2v3" />],
  ['Profile', <path d="M1 1.500h18v3h-6.500v11H19v3H1v-3h6.500v-11H1z" />],
  ['Layer anzeigen', <path d="M10 1l9 4.500-9 4.500-9-4.500zM1 9.500l9 4.500 9-4.500M1 13.500l9 4.500 9-4.500" />],
  ['Blöcke', <><path d="M10 2l8 4v8.500l-8 4.500-8-4.500V6zM2 6l8 4.500L18 6M10 10.500V19" /><path d="M7 4v2c1 1.500 5 1.500 6 0V4" /><ellipse cx="10" cy="3.500" rx="3" ry="1.500" /></>],
  ['Cloud', <path d="M7 16H5A4 4 0 0 1 4 8.500C4 2 13 1 14.500 6.500 20 6.500 20.500 16 15 16H7M10 13.500V8.500M8 10.500l2-2 2 2" />],
  ['Anheften', <path d="M12 1l7 7-2 .500-3 3 .500 4.500-2 1.500-8-8L6 7.500l4.500.500 2.500-3zM8 13l-6 6" />],
];

const SideStrip = () => (
  <nav aria-label="Paneele" className="mt-[7px] flex w-[35px] shrink-0 flex-col bg-[#17181b]">
    <div className="flex h-[376px] flex-col">
      {SIDE.map(([n, p], k) => (
        <button key={n} type="button" aria-label={n} className={`flex flex-1 items-center justify-center ${k === 1 ? 'bg-[#2e3134]' : ''}`}>
          <svg className="h-[19px] w-[19px]" viewBox="0 0 20 20" fill="none" stroke={W} strokeWidth="1.200" aria-hidden="true">{p}</svg>
        </button>
      ))}
    </div>
  </nav>
);

/* ---------- status bar ---------- */
const STATUS: [string, string, string][] = [
  ['Standard', 'w-[39px]', 'n'], ['ISO-25', 'w-[32px]', 'n'], ['BIM', 'w-[21px]', 'n'], ['FANG', 'w-[28px]', 'off'], ['RASTER', 'w-[38px]', 'off'],
  ['ORTHO', 'w-[33px]', 'off'], ['POLAR', 'w-[33px]', 'on'], ['OFANG', 'w-[33px]', 'on'], ['OTRACK', 'w-[37px]', 'on'], ['LST', 'w-[20px]', 'off'],
  ['MODELL', 'w-[37px]', 'n'], ['1:1', 'w-[17px]', 'n'], ['DBKS', 'w-[25px]', 'on'], ['DYN', 'w-[21px]', 'on'], ['QUAD', 'w-[28px]', 'off'],
  ['RT', 'w-[17px]', 'on'], ['HKA', 'w-[21px]', 'on'], ['UISPERREN', 'w-[49px]', 'off'], ['Keine', 'w-[27px]', 'n'],
];
const LOOK: Record<string, string> = { n: 'text-[#e2e4e6]', on: 'bg-[#4a4c53] text-white', off: 'text-[#65686c]' };

const StatusBar = () => (
  <footer className="flex h-[15px] items-center bg-[#191a1d] pl-[2px] text-[8px] leading-[12px] text-[#e2e4e6]">
    <span>Bereit</span>
    <span className="ml-auto flex h-[12px] w-[140px] items-center justify-end border-l border-[#d8dadd] pr-[4px]">24608.69, 505937.02, 0</span>
    {STATUS.map(([t, w, k]) => (
      <button key={t} type="button" className={`flex h-[12px] items-center justify-center border-l border-[#d8dadd] px-px whitespace-nowrap ${w}`}>
        <span className={LOOK[k]}>{t}</span>
      </button>
    ))}
    <button type="button" aria-label="Statusmenü" className="flex h-[12px] w-[13px] items-center justify-center border-l border-[#d8dadd]"><Caret /></button>
    <svg className="mr-px ml-[24px] h-[7px] w-[7px]" viewBox="0 0 7 7" fill="#a8abb0" aria-hidden="true"><path d="M5 0h2v7H5zM2.500 3h1.500v4H2.500zM0 5h1.500v2H0z" /></svg>
  </footer>
);

export default function App() {
  return (
    <div className="min-h-screen bg-black pt-[140px] font-['Open_Sans','Noto_Sans',sans-serif]">
      <div className="flex min-h-[800px] flex-col bg-[#2e3134]">
        <TitleBar />
        <QuickBar />
        <TabBar />
        <Ribbon />
        <main className="flex flex-1 items-stretch">
          <StructurePanel />
          <div className="ml-[2px] flex min-w-0 flex-1 flex-col">
            <DocTabs />
            <div className="relative min-h-[532px] flex-1 overflow-hidden border-t border-[#74767f] bg-[#606470]">
              <Model />
              <ViewCube />
              <span className="absolute bottom-[9px] left-[42px] text-[10px] leading-[16px] text-[#8d9099]">Gebäude-3</span>
            </div>
            <LayoutTabs />
            <CommandArea />
          </div>
          <PropertiesPanel />
          <SideStrip />
        </main>
        <StatusBar />
      </div>
    </div>
  );
}
